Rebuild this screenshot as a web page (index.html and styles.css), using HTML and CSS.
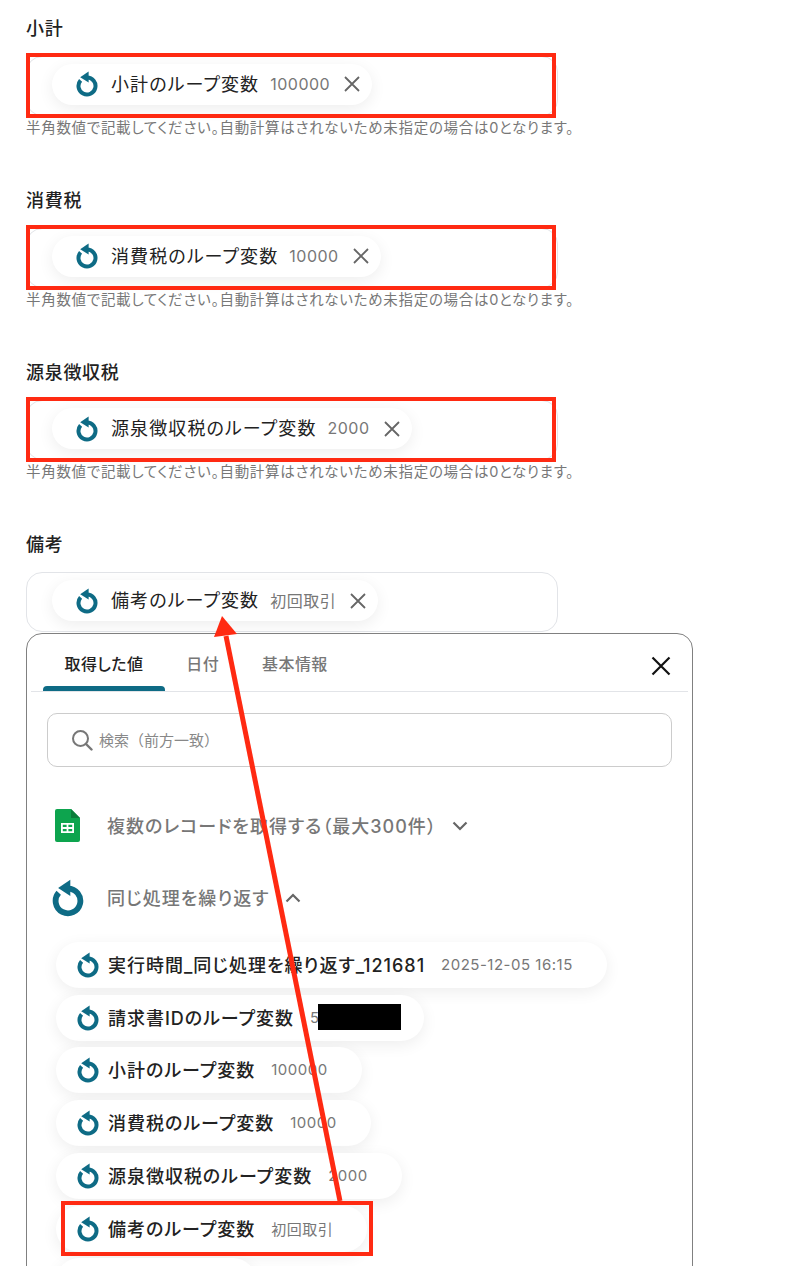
FILE: index.html
```html
<!DOCTYPE html>
<html lang="ja">
<head>
    <meta charset="UTF-8">
    <meta name="viewport" content="width=device-width, initial-scale=1.0">
    <title>Loop variables</title>
    <link rel="stylesheet" href="styles.css">
</head>
<body>
    <svg class="sprite" width="0" height="0">
        <symbol id="loop" viewBox="0 0 22 26">
            <path d="M11 6.5A8.5 8.5 0 1 1 4.6 9.4" fill="none" stroke="currentColor" stroke-width="4"/>
            <path d="M12.6 .4V11.6L4.2 6.2Z" fill="currentColor"/>
        </symbol>
        <symbol id="cross" viewBox="0 0 18 18">
            <path d="M2 2L16 16M16 2L2 16" fill="none" stroke="currentColor" stroke-width="1.8"/>
        </symbol>
    </svg>

    <div class="page">
        <section class="form-row">
            <div class="form-label">小計</div>
            <div class="field">
                <div class="chip">
                    <svg class="loop-icon"><use href="#loop"/></svg>
                    <span class="chip-name">小計のループ変数</span>
                    <span class="chip-value">100000</span>
                    <svg class="chip-close"><use href="#cross"/></svg>
                </div>
                <div class="mark"></div>
            </div>
            <div class="hint">半角数値で記載してください。自動計算はされないため未指定の場合は0となります。</div>
        </section>

        <section class="form-row">
            <div class="form-label">消費税</div>
            <div class="field">
                <div class="chip">
                    <svg class="loop-icon"><use href="#loop"/></svg>
                    <span class="chip-name">消費税のループ変数</span>
                    <span class="chip-value">10000</span>
                    <svg class="chip-close"><use href="#cross"/></svg>
                </div>
                <div class="mark"></div>
            </div>
            <div class="hint">半角数値で記載してください。自動計算はされないため未指定の場合は0となります。</div>
        </section>

        <section class="form-row">
            <div class="form-label">源泉徴収税</div>
            <div class="field">
                <div class="chip">
                    <svg class="loop-icon"><use href="#loop"/></svg>
                    <span class="chip-name">源泉徴収税のループ変数</span>
                    <span class="chip-value">2000</span>
                    <svg class="chip-close"><use href="#cross"/></svg>
                </div>
                <div class="mark"></div>
            </div>
            <div class="hint">半角数値で記載してください。自動計算はされないため未指定の場合は0となります。</div>
        </section>

        <section class="form-row last">
            <div class="form-label">備考</div>
            <div class="field">
                <div class="chip">
                    <svg class="loop-icon"><use href="#loop"/></svg>
                    <span class="chip-name">備考のループ変数</span>
                    <span class="chip-value">初回取引</span>
                    <svg class="chip-close"><use href="#cross"/></svg>
                </div>
            </div>
        </section>

        <div class="panel">
            <div class="tabs">
                <div class="tab active">取得した値</div>
                <div class="tab">日付</div>
                <div class="tab">基本情報</div>
                <svg class="panel-close" viewBox="0 0 20 20"><path d="M1.5 1.5L18.5 18.5M18.5 1.5L1.5 18.5" fill="none" stroke="#111" stroke-width="2.2"/></svg>
            </div>

            <div class="search">
                <svg class="search-icon" viewBox="0 0 22 22"><circle cx="9.5" cy="9.5" r="7.5" fill="none" stroke="#777" stroke-width="2"/><path d="M15 15L20.5 20.5" stroke="#777" stroke-width="2.4" stroke-linecap="round"/></svg>
                <span>検索（前方一致）</span>
            </div>

            <div class="group-head">
                <svg class="sheet-icon" viewBox="0 0 25 33">
                    <path d="M2 0H16L25 9V31A2 2 0 0 1 23 33H2A2 2 0 0 1 0 31V2A2 2 0 0 1 2 0Z" fill="#0da44e"/>
                    <path d="M16 0L25 9H16Z" fill="#0a7d3a"/>
                    <path d="M6 14H19V24H6ZM7.8 15.8V18H11.6V15.8ZM13.4 15.8V18H17.2V15.8ZM7.8 20V22.2H11.6V20ZM13.4 20V22.2H17.2V20Z" fill="#fff" fill-rule="evenodd"/>
                </svg>
                <span class="group-title">複数のレコードを取得する（最大300件）</span>
                <svg class="chevron" viewBox="0 0 16 10"><path d="M1.5 1.5L8 8L14.5 1.5" fill="none" stroke="#666" stroke-width="2.2"/></svg>
            </div>

            <div class="group-head second">
                <svg class="loop-icon large"><use href="#loop"/></svg>
                <span class="group-title">同じ処理を繰り返す</span>
                <svg class="chevron" viewBox="0 0 16 10"><path d="M1.5 8.5L8 2L14.5 8.5" fill="none" stroke="#666" stroke-width="2.2"/></svg>
            </div>

            <div class="values">
                <div class="value-chip">
                    <svg class="loop-icon"><use href="#loop"/></svg>
                    <span class="value-name">実行時間_同じ処理を繰り返す_121681</span>
                    <span class="chip-value">2025-12-05 16:15</span>
                </div>
                <div class="value-chip">
                    <svg class="loop-icon"><use href="#loop"/></svg>
                    <span class="value-name">請求書IDのループ変数</span>
                    <span class="chip-value redacted-wrap">5<span class="redacted"></span></span>
                </div>
                <div class="value-chip">
                    <svg class="loop-icon"><use href="#loop"/></svg>
                    <span class="value-name">小計のループ変数</span>
                    <span class="chip-value">100000</span>
                </div>
                <div class="value-chip">
                    <svg class="loop-icon"><use href="#loop"/></svg>
                    <span class="value-name">消費税のループ変数</span>
                    <span class="chip-value">10000</span>
                </div>
                <div class="value-chip">
                    <svg class="loop-icon"><use href="#loop"/></svg>
                    <span class="value-name">源泉徴収税のループ変数</span>
                    <span class="chip-value">2000</span>
                </div>
                <div class="value-chip">
                    <svg class="loop-icon"><use href="#loop"/></svg>
                    <span class="value-name">備考のループ変数</span>
                    <span class="chip-value">初回取引</span>
                    <div class="mark row-mark"></div>
                </div>
                <div class="value-chip stub"></div>
            </div>
        </div>

        <svg class="arrow" width="798" height="1266" viewBox="0 0 798 1266">
            <path d="M340 1201L226 636" fill="none" stroke="#ff2a12" stroke-width="5"/>
            <path d="M222 616L237 634L214 637Z" fill="#ff2a12"/>
        </svg>
    </div>
</body>
</html>
```

FILE: styles.css
```css
body {
    margin: 0;
    background: #ffffff;
    color: #222222;
    font-family: Inter, "Noto Sans CJK JP", sans-serif;
    font-feature-settings: "palt";
}

.sprite {
    display: block;
    height: 0;
}

.page {
    position: relative;
    box-sizing: border-box;
    height: 1266px;
    padding: 15.5px 0 0 26px;
    overflow: hidden;
}

.form-row {
    width: 532px;
    height: 172.3px;
}

.form-row.last {
    height: 100.6px;
}

.form-label {
    height: 26px;
    line-height: 25px;
    font-size: 18px;
    font-weight: 500;
    letter-spacing: 0.7px;
    margin-bottom: 14px;
}

.field {
    position: relative;
    box-sizing: border-box;
    width: 532px;
    height: 60px;
    padding: 7px 0 0 25px;
    border: 1px solid #e2e4e8;
    border-radius: 16px;
}

.mark {
    position: absolute;
    top: -4px;
    left: -1px;
    right: 1px;
    bottom: -3px;
    border: 4px solid #ff2a12;
}

.hint {
    height: 24px;
    line-height: 24px;
    font-size: 14.5px;
    letter-spacing: 0.7px;
    color: #777777;
    white-space: nowrap;
}

.chip {
    display: inline-flex;
    align-items: center;
    height: 41px;
    padding: 0 11px 0 24px;
    background: #ffffff;
    border-radius: 21px;
    box-shadow: 0 4px 16px rgba(0, 0, 0, 0.07);
}

.loop-icon {
    flex: none;
    width: 22px;
    height: 26px;
    color: #0e6b85;
}

.loop-icon.large {
    width: 32px;
    height: 38px;
}

.chip-name {
    margin: 0 0 3px 13px;
    font-size: 18px;
    letter-spacing: 1.1px;
}

.chip-value {
    margin: 0 0 1px 11px;
    font-size: 16px;
    letter-spacing: 0.5px;
    color: #777777;
}

.chip-close {
    width: 18px;
    height: 18px;
    margin-left: 13px;
    color: #666666;
}

.panel {
    box-sizing: border-box;
    width: 667px;
    height: 700px;
    padding: 0 4px;
    border: 1px solid #808080;
    border-radius: 16px;
}

.tabs {
    position: relative;
    display: flex;
    height: 57px;
    padding-left: 12px;
    border-bottom: 1px solid #e2e4e8;
}

.tab {
    position: relative;
    padding: 0 21.5px;
    line-height: 60px;
    font-size: 16px;
    font-weight: 500;
    color: #777777;
    letter-spacing: 0.4px;
}

.tab.active {
    color: #222222;
}

.tab.active::after {
    content: "";
    position: absolute;
    left: 0;
    right: 0;
    bottom: 0;
    height: 5px;
    background: #0e6b85;
    border-radius: 4px 4px 0 0;
}

.panel-close {
    position: absolute;
    top: 22px;
    right: 17px;
    width: 20px;
    height: 20px;
}

.search {
    display: flex;
    align-items: center;
    box-sizing: border-box;
    height: 54px;
    margin: 21px 16px 0;
    padding-left: 23px;
    border: 1px solid #cccccc;
    border-radius: 10px;
    font-size: 15px;
    font-feature-settings: normal;
    color: #888888;
}

.search-icon {
    width: 22px;
    height: 22px;
    margin-right: 6px;
}

.group-head {
    display: flex;
    align-items: center;
    height: 40px;
    margin-top: 39px;
    padding-left: 24px;
}

.group-head.second {
    margin-top: 32px;
    padding-left: 21px;
}

.sheet-icon {
    width: 25px;
    height: 33px;
}

.group-head.second .group-title {
    margin-left: 23px;
}

.group-title {
    margin: 0 0 2px 27px;
    font-size: 18px;
    font-weight: 500;
    letter-spacing: 1px;
    color: #777777;
}

.chevron {
    width: 16px;
    height: 10px;
    margin-left: 15px;
}

.values {
    display: flex;
    flex-direction: column;
    align-items: flex-start;
    gap: 6.75px;
    margin-top: 24px;
    padding-left: 25px;
}

.value-chip {
    position: relative;
    display: flex;
    align-items: center;
    height: 46px;
    padding: 0 34px 0 21px;
    background: #ffffff;
    border-radius: 23px;
    box-shadow: 0 4px 16px rgba(0, 0, 0, 0.07);
}

.value-chip .chip-value {
    margin-left: 16px;
    font-size: 15px;
}

.value-chip .redacted-wrap {
    display: flex;
    align-items: center;
    margin-right: -11px;
}

.redacted {
    width: 83px;
    height: 26px;
    margin-left: -2px;
    background: #000000;
}

.value-name {
    margin: 0 0 2px 9px;
    font-size: 18px;
    font-weight: 500;
    letter-spacing: 0.98px;
}

.value-chip.stub {
    width: 200px;
    box-sizing: border-box;
}

.row-mark {
    top: -5px;
    left: 5px;
    right: -6px;
    bottom: -4px;
}

.arrow {
    position: absolute;
    top: 0;
    left: 0;
    pointer-events: none;
}
```
